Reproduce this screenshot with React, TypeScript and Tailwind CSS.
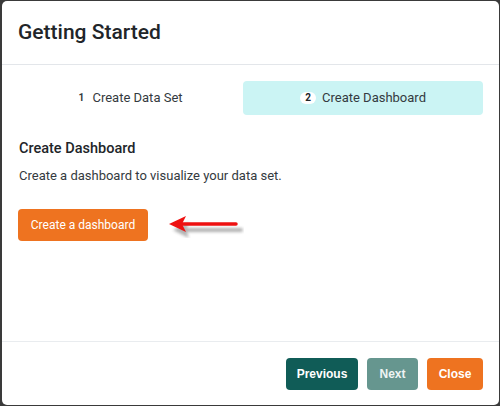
import React from 'react';

const steps = [
  { n: 1, label: 'Create Data Set', active: false },
  { n: 2, label: 'Create Dashboard', active: true },
];

function RedArrow() {
  return (
    <svg width="76" height="26" viewBox="0 0 76 26" className="ml-[20px]">
      <defs>
        <filter id="blur" x="-20%" y="-50%" width="140%" height="200%">
          <feGaussianBlur stdDeviation="1.6" />
        </filter>
      </defs>
      <g filter="url(#blur)" opacity="0.45" transform="translate(3 4)">
        <path d="M70 14 L14 14" stroke="#555" strokeWidth="4" strokeLinecap="round" />
        <path d="M2 14 L18 6 L15 14 L18 22 Z" fill="#555" />
      </g>
      <path d="M68 12 L12 12" stroke="#ee1111" strokeWidth="3.5" strokeLinecap="round" />
      <path d="M1 12 L18 4 L14 12 L18 20 Z" fill="#ee1111" />
    </svg>
  );
}

export default function App() {
  return (
    <div className="w-[500px] h-[406px] bg-[#3a3a3a] p-px" style={{ fontFamily: 'Roboto, "Liberation Sans", sans-serif' }}>
      <div className="h-full bg-white rounded-[5px] ml-px flex flex-col">
        {/* header */}
        <div className="h-[64px] shrink-0 flex items-center px-[16px] border-b border-[#e3e6ea]">
          <h1 className="text-[21px] font-medium text-[#212529] leading-none pb-px">Getting Started</h1>
        </div>

        {/* body */}
        <div className="flex-1 px-[16px] pt-[16px]">
          <div className="grid grid-cols-[1fr_240px] gap-[2px]">
            {steps.map((s) => (
              <div
                key={s.n}
                className={`h-[34px] rounded-[4px] flex items-center justify-center gap-[6px] text-[13px] text-[#343a40] ${
                  s.active ? 'bg-[#cbf4f4]' : ''
                }`}
              >
                <span
                  className={`text-[10px] font-bold leading-none flex items-center justify-center ${
                    s.active ? 'bg-white rounded-full w-[16px] h-[12px] text-[#212529]' : 'w-[10px] text-[#343a40]'
                  }`}
                >
                  {s.n}
                </span>
                <span>{s.label}</span>
              </div>
            ))}
          </div>

          <h2 className="mt-[24px] ml-px text-[14.5px] font-medium text-[#212529] leading-[20px]">Create Dashboard</h2>
          <p className="mt-[8px] ml-px text-[13px] text-[#343a40] leading-[18px]">
            Create a dashboard to visualize your data set.
          </p>

          <div className="mt-[24px] flex items-center">
            <button className="h-[32px] w-[130px] rounded-[4px] bg-[#ee7320] text-white text-[12px]">
              Create a dashboard
            </button>
            <RedArrow />
          </div>
        </div>

        {/* footer */}
        <div
          className="shrink-0 border-t border-[#e9ecef] flex justify-end items-center gap-[9px] pt-[16px] pb-[15px] pr-[16px]"
          style={{ fontFamily: '"Liberation Sans", Arial, sans-serif' }}
        >
          <button className="h-[32px] w-[72px] rounded-[4px] bg-[#105c57] text-white text-[12px] font-bold">Previous</button>
          <button className="h-[32px] w-[51px] rounded-[4px] bg-[#66968f] text-[#eef4f3] text-[12px] font-bold">Next</button>
          <button className="h-[32px] w-[56px] rounded-[4px] bg-[#ee7320] text-white text-[12px] font-bold">Close</button>
        </div>
      </div>
    </div>
  );
}
